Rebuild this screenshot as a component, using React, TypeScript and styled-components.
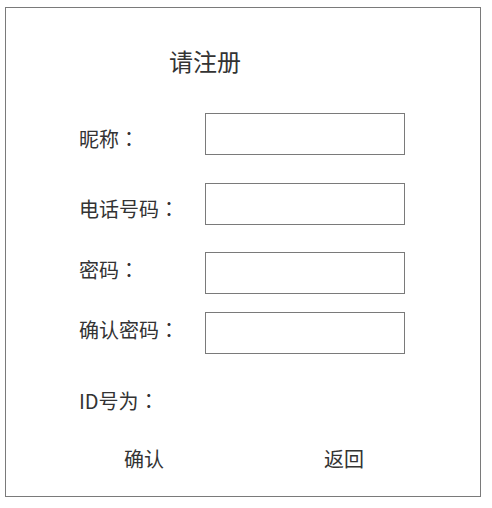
import React from 'react';
import styled, { createGlobalStyle } from 'styled-components';

const GlobalStyle = createGlobalStyle`
  html, body {
    margin: 0;
    padding: 0;
    background: #ffffff;
  }
  body {
    font-family: "Noto Sans CJK SC", "Noto Sans", sans-serif;
    color: #333333;
  }
`;

const Frame = styled.form`
  box-sizing: border-box;
  width: 476px;
  height: 490px;
  margin: 7px 0 0 5px;
  border: 1px solid #7a7a7a;
  display: flex;
  flex-direction: column;
`;

const Title = styled.h2`
  margin: 41px 0 0 163px;
  font-size: 24px;
  line-height: 24px;
  font-weight: 400;
  color: #333333;
`;

const Row = styled.div<{ $gap: number }>`
  display: flex;
  align-items: flex-start;
  margin-top: ${p => p.$gap}px;
  padding-left: 73px;
`;

const Label = styled.label<{ $offset: number }>`
  width: 126px;
  margin-top: ${p => p.$offset}px;
  font-size: 20px;
  line-height: 20px;
  white-space: nowrap;
`;

/* the fullwidth colon sits in the middle of its cell, as in the TC cut */
const Colon = styled.span`
  font-family: "Noto Sans CJK TC", "Noto Sans CJK SC", sans-serif;
`;

const Field = styled.input`
  box-sizing: border-box;
  width: 200px;
  height: 42px;
  margin: 0;
  padding: 0 6px;
  border: 1px solid #7a7a7a;
  border-radius: 0;
  font-size: 16px;
  font-family: inherit;
  outline: none;
  background: #ffffff;
`;

const Actions = styled.div`
  display: flex;
  gap: 160px;
  margin-top: 38px;
  padding-left: 118px;
`;

const Action = styled.button`
  padding: 0;
  margin: 0;
  border: none;
  background: none;
  font-family: inherit;
  font-size: 20px;
  line-height: 20px;
  color: #333333;
  cursor: pointer;
`;

const fields = [
  { label: '昵称', gap: 40, offset: 16, type: 'text' },
  { label: '电话号码', gap: 28, offset: 16, type: 'tel' },
  { label: '密码', gap: 27, offset: 8, type: 'password' },
  { label: '确认密码', gap: 18, offset: 8, type: 'password' },
];

function App() {
  const [values, setValues] = React.useState<string[]>(['', '', '', '']);

  return (
    <>
      <GlobalStyle />
      <Frame onSubmit={e => e.preventDefault()}>
        <Title>请注册</Title>
        {fields.map((f, i) => (
          <Row key={f.label} $gap={f.gap}>
            <Label $offset={f.offset}>
              {f.label}
              <Colon>：</Colon>
            </Label>
            <Field
              type={f.type}
              value={values[i]}
              onChange={e => setValues(values.map((v, j) => (j === i ? e.target.value : v)))}
            />
          </Row>
        ))}
        <Row $gap={37}>
          <Label $offset={0}>
            ID号为<Colon>：</Colon>
          </Label>
        </Row>
        <Actions>
          <Action type="submit">确认</Action>
          <Action type="button">返回</Action>
        </Actions>
      </Frame>
    </>
  );
}

export default App;
